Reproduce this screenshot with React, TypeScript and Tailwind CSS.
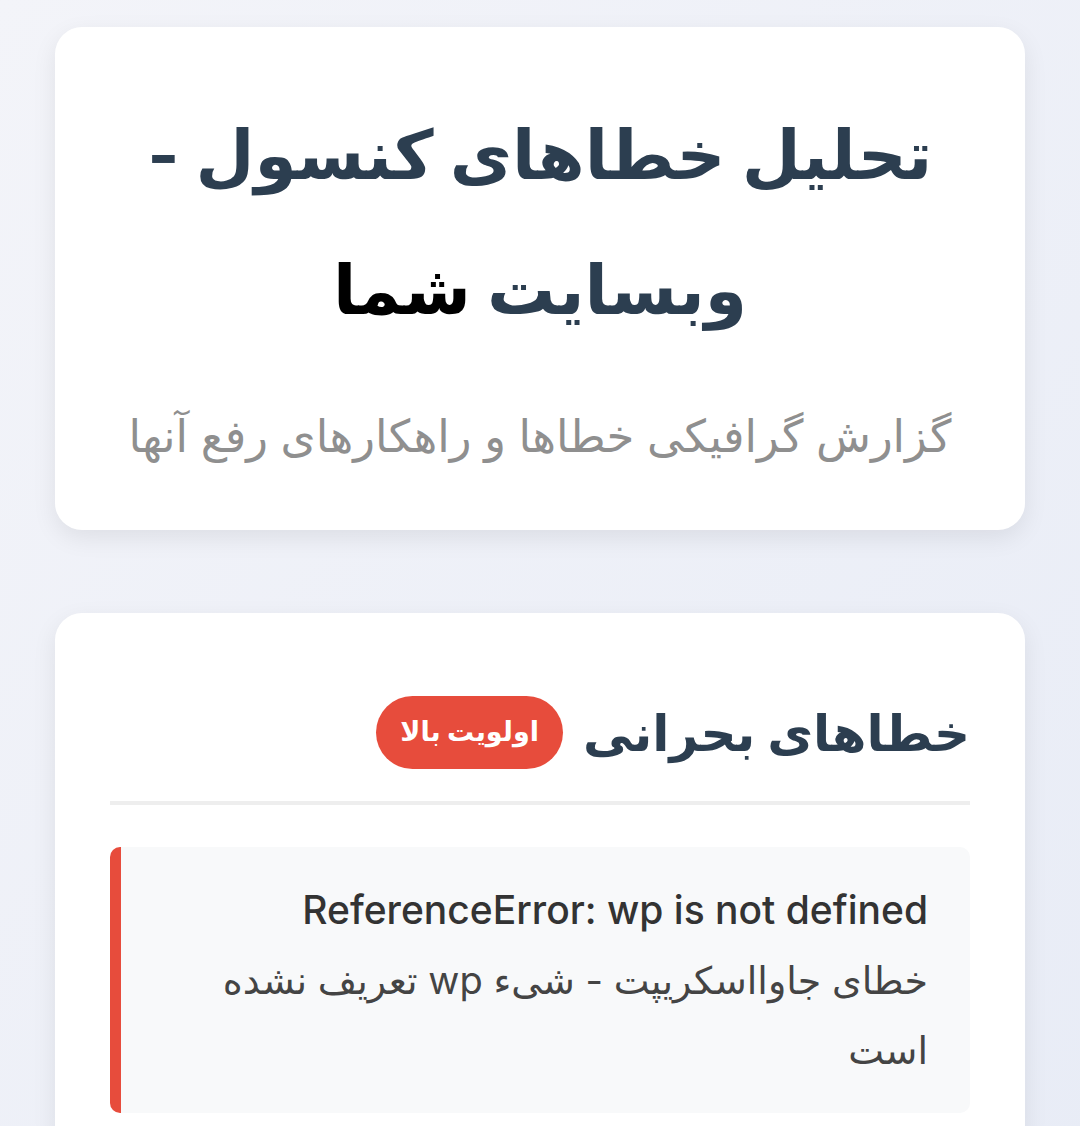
export default function App() {
  return (
    <div
      dir="rtl"
      className="min-h-screen bg-gradient-to-br from-[#f3f4f9] to-[#e8ecf6] px-[55px] pt-[27px] pb-16"
      style={{ fontFamily: 'Inter, "DejaVu Sans", sans-serif' }}
    >
      {/* Header */}
      <header className="bg-white rounded-[27px] shadow-[0_8px_24px_rgba(0,0,0,0.08)] px-[55px] pt-[60px] pb-[59px] text-center">
        <h1 className="text-[68px] leading-[135px] font-bold text-[#2c3e50]">
          تحلیل خطاهای کنسول - وبسایت <span className="text-black">شما</span>
        </h1>
        <p className="mt-[44px] text-[45px] leading-[70px] text-[#8f8f8f]">
          گزارش گرافیکی خطاها و راهکارهای رفع آنها
        </p>
      </header>

      {/* Critical errors */}
      <section className="mt-[83px] bg-white rounded-[27px] shadow-[0_8px_24px_rgba(0,0,0,0.08)] px-[55px] pt-[83px] pb-10">
        <div className="flex items-center gap-[20px] pb-[32px] border-b-4 border-[#eeeeee]">
          <h2 className="text-[50px] leading-[70px] font-bold text-[#2c3e50]">خطاهای بحرانی</h2>
          <span className="bg-[#e74c3c] text-white rounded-full px-[24px] h-[73px] flex items-center text-[27px] font-bold">
            اولویت بالا
          </span>
        </div>

        <div className="mt-[42px] bg-[#f8f9fa] rounded-[10px] border-l-[11px] border-[#e74c3c] pr-[42px] pl-[40px] pt-[38px] pb-[28px]">
          <div className="text-[39px] leading-[50px] font-medium text-[#333333] text-right" dir="ltr">
            ReferenceError: wp is not defined
          </div>
          <p className="mt-[10px] text-[38px] leading-[70px] text-[#444444]">
            خطای جاوااسکریپت - شیء wp تعریف نشده است
          </p>
        </div>
      </section>
    </div>
  );
}
